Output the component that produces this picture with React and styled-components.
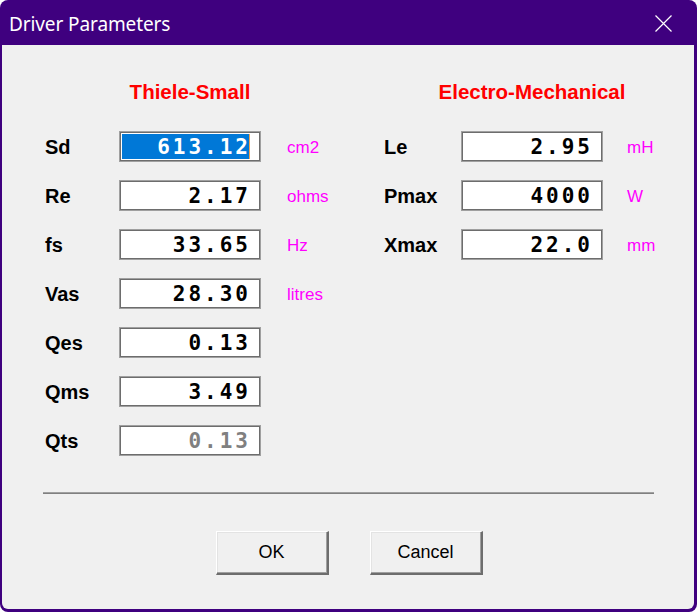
import React from "react";
import styled, { createGlobalStyle } from "styled-components";

const Global = createGlobalStyle`
  html, body { margin: 0; padding: 0; background: #ffffff; }
  body { width: 697px; height: 612px; overflow: hidden; }
  #root { width: 697px; height: 612px; }
`;

const Window = styled.div`
  box-sizing: border-box;
  width: 697px;
  height: 612px;
  background: #3f007f;
  border-radius: 8px;
  padding: 0 3px 3px 2px;
  display: flex;
  flex-direction: column;
  overflow: hidden;
`;

const TitleBar = styled.div`
  height: 45px;
  flex: 0 0 45px;
  display: flex;
  align-items: center;
  justify-content: space-between;
  padding: 0 22px 0 7px;
  color: #ffffff;
  font-family: "Noto Sans", "Open Sans", sans-serif;
  font-size: 19px;
`;

const Title = styled.span`
  letter-spacing: -0.1px;
  margin-top: 3px;
`;

const CloseWrap = styled.span`
  display: flex;
  margin-top: 2px;
`;

const Body = styled.div`
  flex: 1;
  background: #f0f0f0;
  border-radius: 0 0 6px 6px;
  display: flex;
  flex-direction: column;
  padding-top: 35px;
`;

const Columns = styled.div`
  display: flex;
  padding-left: 43px;
`;

const Column = styled.div`
  flex: 0 0 ${(p) => p.$width}px;
  display: flex;
  flex-direction: column;
`;

const Header = styled.div`
  margin-left: ${(p) => p.$offset}px;
  width: 142px;
  height: 24px;
  display: flex;
  justify-content: center;
  align-items: center;
  white-space: nowrap;
  color: #ff0000;
  font-family: "Liberation Sans", Arial, sans-serif;
  font-weight: bold;
  font-size: 20.5px;
  margin-bottom: 27px;
`;

const Rows = styled.div`
  display: grid;
  grid-template-columns: ${(p) => p.$label}px 142px auto;
  row-gap: 18px;
  align-items: center;
`;

const Label = styled.div`
  font-family: "Liberation Sans", Arial, sans-serif;
  font-weight: bold;
  font-size: 20px;
  color: #000000;
  margin-top: 1px;
`;

const ValueBox = styled.div`
  box-sizing: border-box;
  height: 31px;
  background: #ffffff;
  border: 1px solid #a0a0a0;
  box-shadow: inset 0 0 0 1px #6d6d6d;
  display: flex;
  align-items: stretch;
  justify-content: flex-end;
  padding: 2px 10px 2px 2px;
`;

const Value = styled.span`
  display: flex;
  align-items: center;
  justify-content: flex-end;
  flex: ${(p) => (p.$selected ? 1 : "0 0 auto")};
  background: ${(p) => (p.$selected ? "#0078d7" : "transparent")};
  color: ${(p) => (p.$selected ? "#ffffff" : p.$disabled ? "#808080" : "#000000")};
  border-right: 1px solid ${(p) => (p.$selected ? "#f0a050" : "transparent")};
  padding-right: 1px;
  font-family: "DejaVu Sans Mono", "Liberation Mono", monospace;
  font-weight: bold;
  font-size: 21px;
  letter-spacing: 3px;
`;

const Digits = styled.span`
  margin-right: -3px;
`;

const Unit = styled.div`
  padding-left: ${(p) => p.$gap}px;
  font-family: "Liberation Sans", Arial, sans-serif;
  font-size: 17px;
  color: #ff00ff;
  margin-top: 2px;
`;

const Separator = styled.div`
  margin: 36px 40px 0 41px;
  height: 0;
  border-top: 1px solid #a0a0a0;
  border-bottom: 1px solid #808080;
`;

const ButtonRow = styled.div`
  display: flex;
  justify-content: center;
  gap: 41px;
  margin-top: 37px;
  padding-left: 2px;
`;

const Button = styled.button`
  box-sizing: border-box;
  width: 113px;
  height: 44px;
  background: #f0f0f0;
  border: none;
  border-top: 1px solid #ffffff;
  border-left: 1px solid #ffffff;
  border-right: 2px solid #6d6d6d;
  border-bottom: 2px solid #6d6d6d;
  box-shadow: inset -1px -1px 0 #a0a0a0, inset 1px 1px 0 #e3e3e3;
  font-family: "Liberation Sans", Arial, sans-serif;
  font-size: 18px;
  color: #000000;
  padding: 0;
`;

const CloseIcon = () => (
  <svg width="17" height="17" viewBox="0 0 17 17">
    <path d="M0.5 0.5 L16.5 16.5 M16.5 0.5 L0.5 16.5" stroke="#ffffff" strokeWidth="1.2" fill="none" />
  </svg>
);

const left = [
  { label: "Sd", value: "613.12", unit: "cm2", selected: true },
  { label: "Re", value: "2.17", unit: "ohms" },
  { label: "fs", value: "33.65", unit: "Hz" },
  { label: "Vas", value: "28.30", unit: "litres" },
  { label: "Qes", value: "0.13" },
  { label: "Qms", value: "3.49" },
  { label: "Qts", value: "0.13", disabled: true },
];

const right = [
  { label: "Le", value: "2.95", unit: "mH" },
  { label: "Pmax", value: "4000", unit: "W" },
  { label: "Xmax", value: "22.0", unit: "mm" },
];

function ParamRows({ items, labelWidth, unitGap }) {
  return (
    <Rows $label={labelWidth}>
      {items.map((it) => (
        <React.Fragment key={it.label}>
          <Label>{it.label}</Label>
          <ValueBox>
            <Value $selected={it.selected} $disabled={it.disabled}>
              <Digits>{it.value}</Digits>
            </Value>
          </ValueBox>
          <Unit $gap={unitGap}>{it.unit || ""}</Unit>
        </React.Fragment>
      ))}
    </Rows>
  );
}

export default function App() {
  return (
    <>
      <Global />
      <Window>
        <TitleBar>
          <Title>Driver Parameters</Title>
          <CloseWrap>
            <CloseIcon />
          </CloseWrap>
        </TitleBar>
        <Body>
          <Columns>
            <Column $width={339}>
              <Header $offset={74}>Thiele-Small</Header>
              <ParamRows items={left} labelWidth={74} unitGap={26} />
            </Column>
            <Column $width={300}>
              <Header $offset={77}>Electro-Mechanical</Header>
              <ParamRows items={right} labelWidth={77} unitGap={24} />
            </Column>
          </Columns>
          <Separator />
          <ButtonRow>
            <Button>OK</Button>
            <Button>Cancel</Button>
          </ButtonRow>
        </Body>
      </Window>
    </>
  );
}
